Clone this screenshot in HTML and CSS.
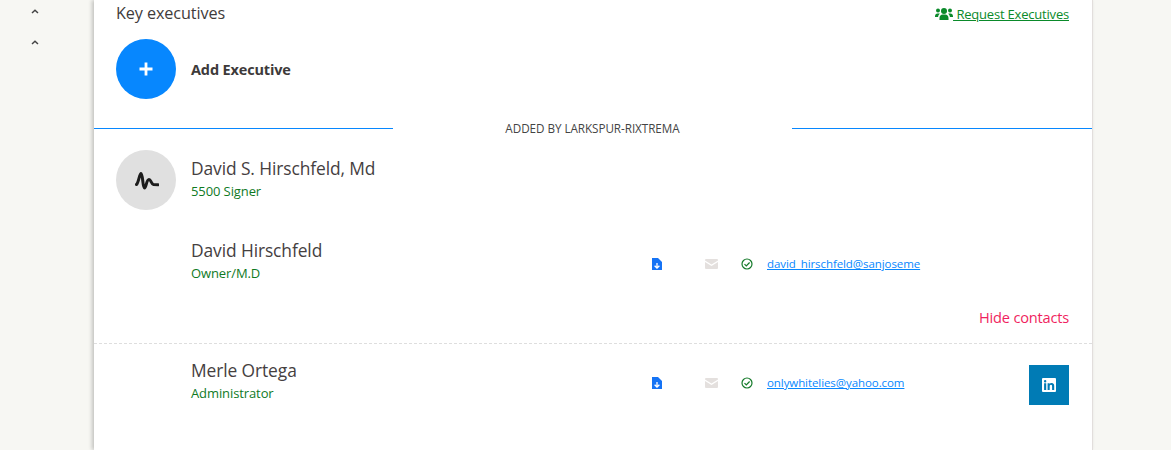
FILE: index.html
```html
<!DOCTYPE html>
<html lang="en">
<head>
<meta charset="utf-8">
<title>Key executives</title>
<link rel="stylesheet" href="styles.css">
</head>
<body>
<div class="page">
  <aside class="rail">
    <svg class="caret" viewBox="0 0 8 5"><path d="M1 4 4 1.300 7 4" /></svg>
    <svg class="caret" viewBox="0 0 8 5"><path d="M1 4 4 1.300 7 4" /></svg>
  </aside>
  <main class="card">
    <header class="head">
      <h2 class="title">Key executives</h2>
      <a class="request" href="#">
        <svg class="users" viewBox="0 0 18 14"><circle cx="9" cy="4" r="3"/><circle cx="3" cy="3.500" r="2"/><circle cx="15" cy="3.500" r="2"/><path d="M4.500 13v-2c0-2 1.500-3.500 3-3.500h3c1.500 0 3 1.500 3 3.500v2zM0 9.500C0 7.500 1 6.500 2.500 6.500h1.200c.4 0 .8.100 1.100.3C3.700 7.600 3.200 8.800 3.100 10H0zM18 9.500c0-2-1-3-2.500-3h-1.200c-.4 0-.8.100-1.100.3 1.100.8 1.600 2 1.700 3.200H18z"/></svg>
        <span> Request Executives</span>
      </a>
    </header>
    <div class="add">
      <span class="add-btn"><svg viewBox="0 0 14 14"><path d="M7 .5v13M.5 7h13"/></svg></span>
      <strong>Add Executive</strong>
    </div>
    <div class="divider"><span>ADDED BY LARKSPUR-RIXTREMA</span></div>
    <div class="signer">
      <span class="avatar"><svg viewBox="0 0 24 19"><path d="M1.500 13.500C3.500 12 4.500 2.500 6 2.500 8 2.500 7.500 17 9.500 17c1.800 0 1.800-8.500 4.500-8.500 2 0 2 4.500 4.500 5L23 13.700"/></svg></span>
      <div class="signer-info">
        <div class="name">David S. Hirschfeld, Md</div>
        <div class="role">5500 Signer</div>
      </div>
    </div>
    <div class="contact first">
      <div class="person">
        <div class="name">David Hirschfeld</div>
        <div class="role">Owner/M.D</div>
      </div>
      <svg class="doc" viewBox="0 0 10 12"><path d="M0 0h6l4 4v8H0z"/><path class="doc-mark" d="M5 5v5M2.600 7.800 5 10l2.400-2.200"/></svg>
      <svg class="mail" viewBox="0 0 13 10"><path d="M0 1.500V1a1 1 0 0 1 1-1h11a1 1 0 0 1 1 1v.5L6.500 5.500zM0 3l6.500 4L13 3v6a1 1 0 0 1-1 1H1a1 1 0 0 1-1-1z"/></svg>
      <svg class="check" viewBox="0 0 12 12"><circle cx="6" cy="6" r="5"/><path d="M3.500 6.200 5.300 8l3.300-3.500"/></svg>
      <a class="email" href="#">david_hirschfeld@sanjoseme</a>
    </div>
    <div class="hide-row"><a class="hide" href="#">Hide contacts</a></div>
    <div class="contact second">
      <div class="person">
        <div class="name">Merle Ortega</div>
        <div class="role">Administrator</div>
      </div>
      <svg class="doc" viewBox="0 0 10 12"><path d="M0 0h6l4 4v8H0z"/><path class="doc-mark" d="M5 5v5M2.600 7.800 5 10l2.400-2.200"/></svg>
      <svg class="mail" viewBox="0 0 13 10"><path d="M0 1.500V1a1 1 0 0 1 1-1h11a1 1 0 0 1 1 1v.5L6.500 5.500zM0 3l6.500 4L13 3v6a1 1 0 0 1-1 1H1a1 1 0 0 1-1-1z"/></svg>
      <svg class="check" viewBox="0 0 12 12"><circle cx="6" cy="6" r="5"/><path d="M3.500 6.200 5.300 8l3.300-3.500"/></svg>
      <a class="email" href="#">onlywhitelies@yahoo.com</a>
      <a class="linkedin" href="#"><svg viewBox="0 0 14 14"><path fill-rule="evenodd" d="M1 0h12a1 1 0 0 1 1 1v12a1 1 0 0 1-1 1H1a1 1 0 0 1-1-1V1a1 1 0 0 1 1-1zM2.100 5.300V12h2.100V5.300zM3.150 2a1.200 1.200 0 1 0 0 2.400 1.200 1.200 0 0 0 0-2.400zM5.600 5.300V12h2.100V8.500c0-1 .3-1.700 1.300-1.700s1.100.8 1.100 1.800V12h2.100V8.200c0-1.800-.6-3.100-2.600-3.100-1 0-1.600.5-1.900 1.100V5.300z"/></svg></a>
    </div>
  </main>
</div>
</body>
</html>
```
FILE: styles.css
```css
* { box-sizing: border-box; }
html, body { margin: 0; height: 450px; overflow: hidden; }
body { background: #f7f7f3; font-family: "Open Sans", "Noto Sans", sans-serif; color: #3d3a3a; }
a { color: inherit; }
.page { display: flex; height: 450px; }
.rail { width: 94px; flex: none; display: flex; flex-direction: column; align-items: center; padding: 9px 24px 0 0; gap: 26px; }
.caret { width: 8px; height: 5px; fill: none; stroke: #444; stroke-width: 1.500; }
.card { width: 999px; flex: none; background: #fff; border-right: 1px solid #e2dedc; box-shadow: -2px 0 4px rgba(0,0,0,.22); }
.head { display: flex; justify-content: space-between; align-items: flex-start; padding: 2px 23px 0 22px; height: 39px; }
.title { margin: 0; font-size: 16.200px; line-height: 22px; font-weight: 500; letter-spacing: -.1px; color: #3f3b3b; }
.request { display: flex; align-items: center; font-size: 13px; line-height: 24px; color: #0a8a2a; letter-spacing: -.2px; }
.request span { text-decoration: underline; white-space: pre; }
.users { width: 18px; height: 14px; fill: #0a8a2a; }
.add { display: flex; align-items: center; gap: 15px; padding-left: 22px; font-size: 14.500px; letter-spacing: -.15px; }
.add-btn { width: 60px; height: 60px; border-radius: 50%; background: #0787fe; display: flex; align-items: center; justify-content: center; }
.add-btn svg { width: 14px; height: 14px; fill: none; stroke: #fff; stroke-width: 2.800; }
.divider { margin-top: 29px; height: 1px; background: #0787fe; display: flex; justify-content: center; align-items: center; }
.divider span { background: #fff; width: 399px; margin-right: 1px; padding-bottom: 2px; text-align: center; font-size: 11.700px; line-height: 14px; color: #444; letter-spacing: -.05px; }
.signer { display: flex; align-items: center; gap: 15px; padding: 21px 0 0 22px; }
.signer-info { padding-bottom: 4px; }
.avatar { width: 60px; height: 60px; border-radius: 50%; background: #e0e0e0; display: flex; align-items: center; justify-content: center; }
.avatar svg { width: 24px; height: 19px; margin-left: 1px; fill: none; stroke: #1c1c1c; stroke-width: 3; stroke-linecap: round; stroke-linejoin: round; }
.name { font-size: 17.400px; line-height: 22px; color: #45403f; letter-spacing: -.1px; }
.role { font-size: 13px; line-height: 18px; margin-top: 3px; color: #0f7a1f; letter-spacing: -.1px; }
.contact { display: flex; align-items: center; padding: 0 23px 0 97px; }
.person { width: 460px; flex: none; }
.contact.first { margin-top: 30px; height: 47px; }
.contact.first .person { padding-bottom: 6px; }
.contact.second { margin-top: 21px; height: 40px; }
.contact.second .person { padding-bottom: 9px; }
.contact.second .doc, .contact.second .mail, .contact.second .check, .contact.second .email { margin-bottom: 5px; }
.doc { width: 10px; height: 12px; margin-left: 1px; fill: #1573f5; flex: none; }
.doc-mark { fill: none; stroke: #fff; stroke-width: 1.300; }
.mail { width: 13px; height: 10px; margin-left: 43px; fill: #e4e0de; flex: none; }
.check { width: 12px; height: 12px; margin-left: 23px; fill: none; stroke: #157a2a; stroke-width: 1.200; flex: none; }
.email { margin-left: 14px; font-size: 11.500px; color: #0787fe; letter-spacing: -.08px; }
.linkedin { margin-left: auto; width: 40px; height: 40px; background: #007bb5; display: flex; align-items: center; justify-content: center; }
.linkedin svg { width: 14px; height: 14px; fill: #fff; }
.hide-row { display: flex; justify-content: flex-end; padding: 19px 23px 0 0; height: 57px; border-bottom: 1px dashed #dedede; }
.hide { font-size: 14.600px; line-height: 22px; color: #f01f60; text-decoration: none; letter-spacing: -.2px; }
```
